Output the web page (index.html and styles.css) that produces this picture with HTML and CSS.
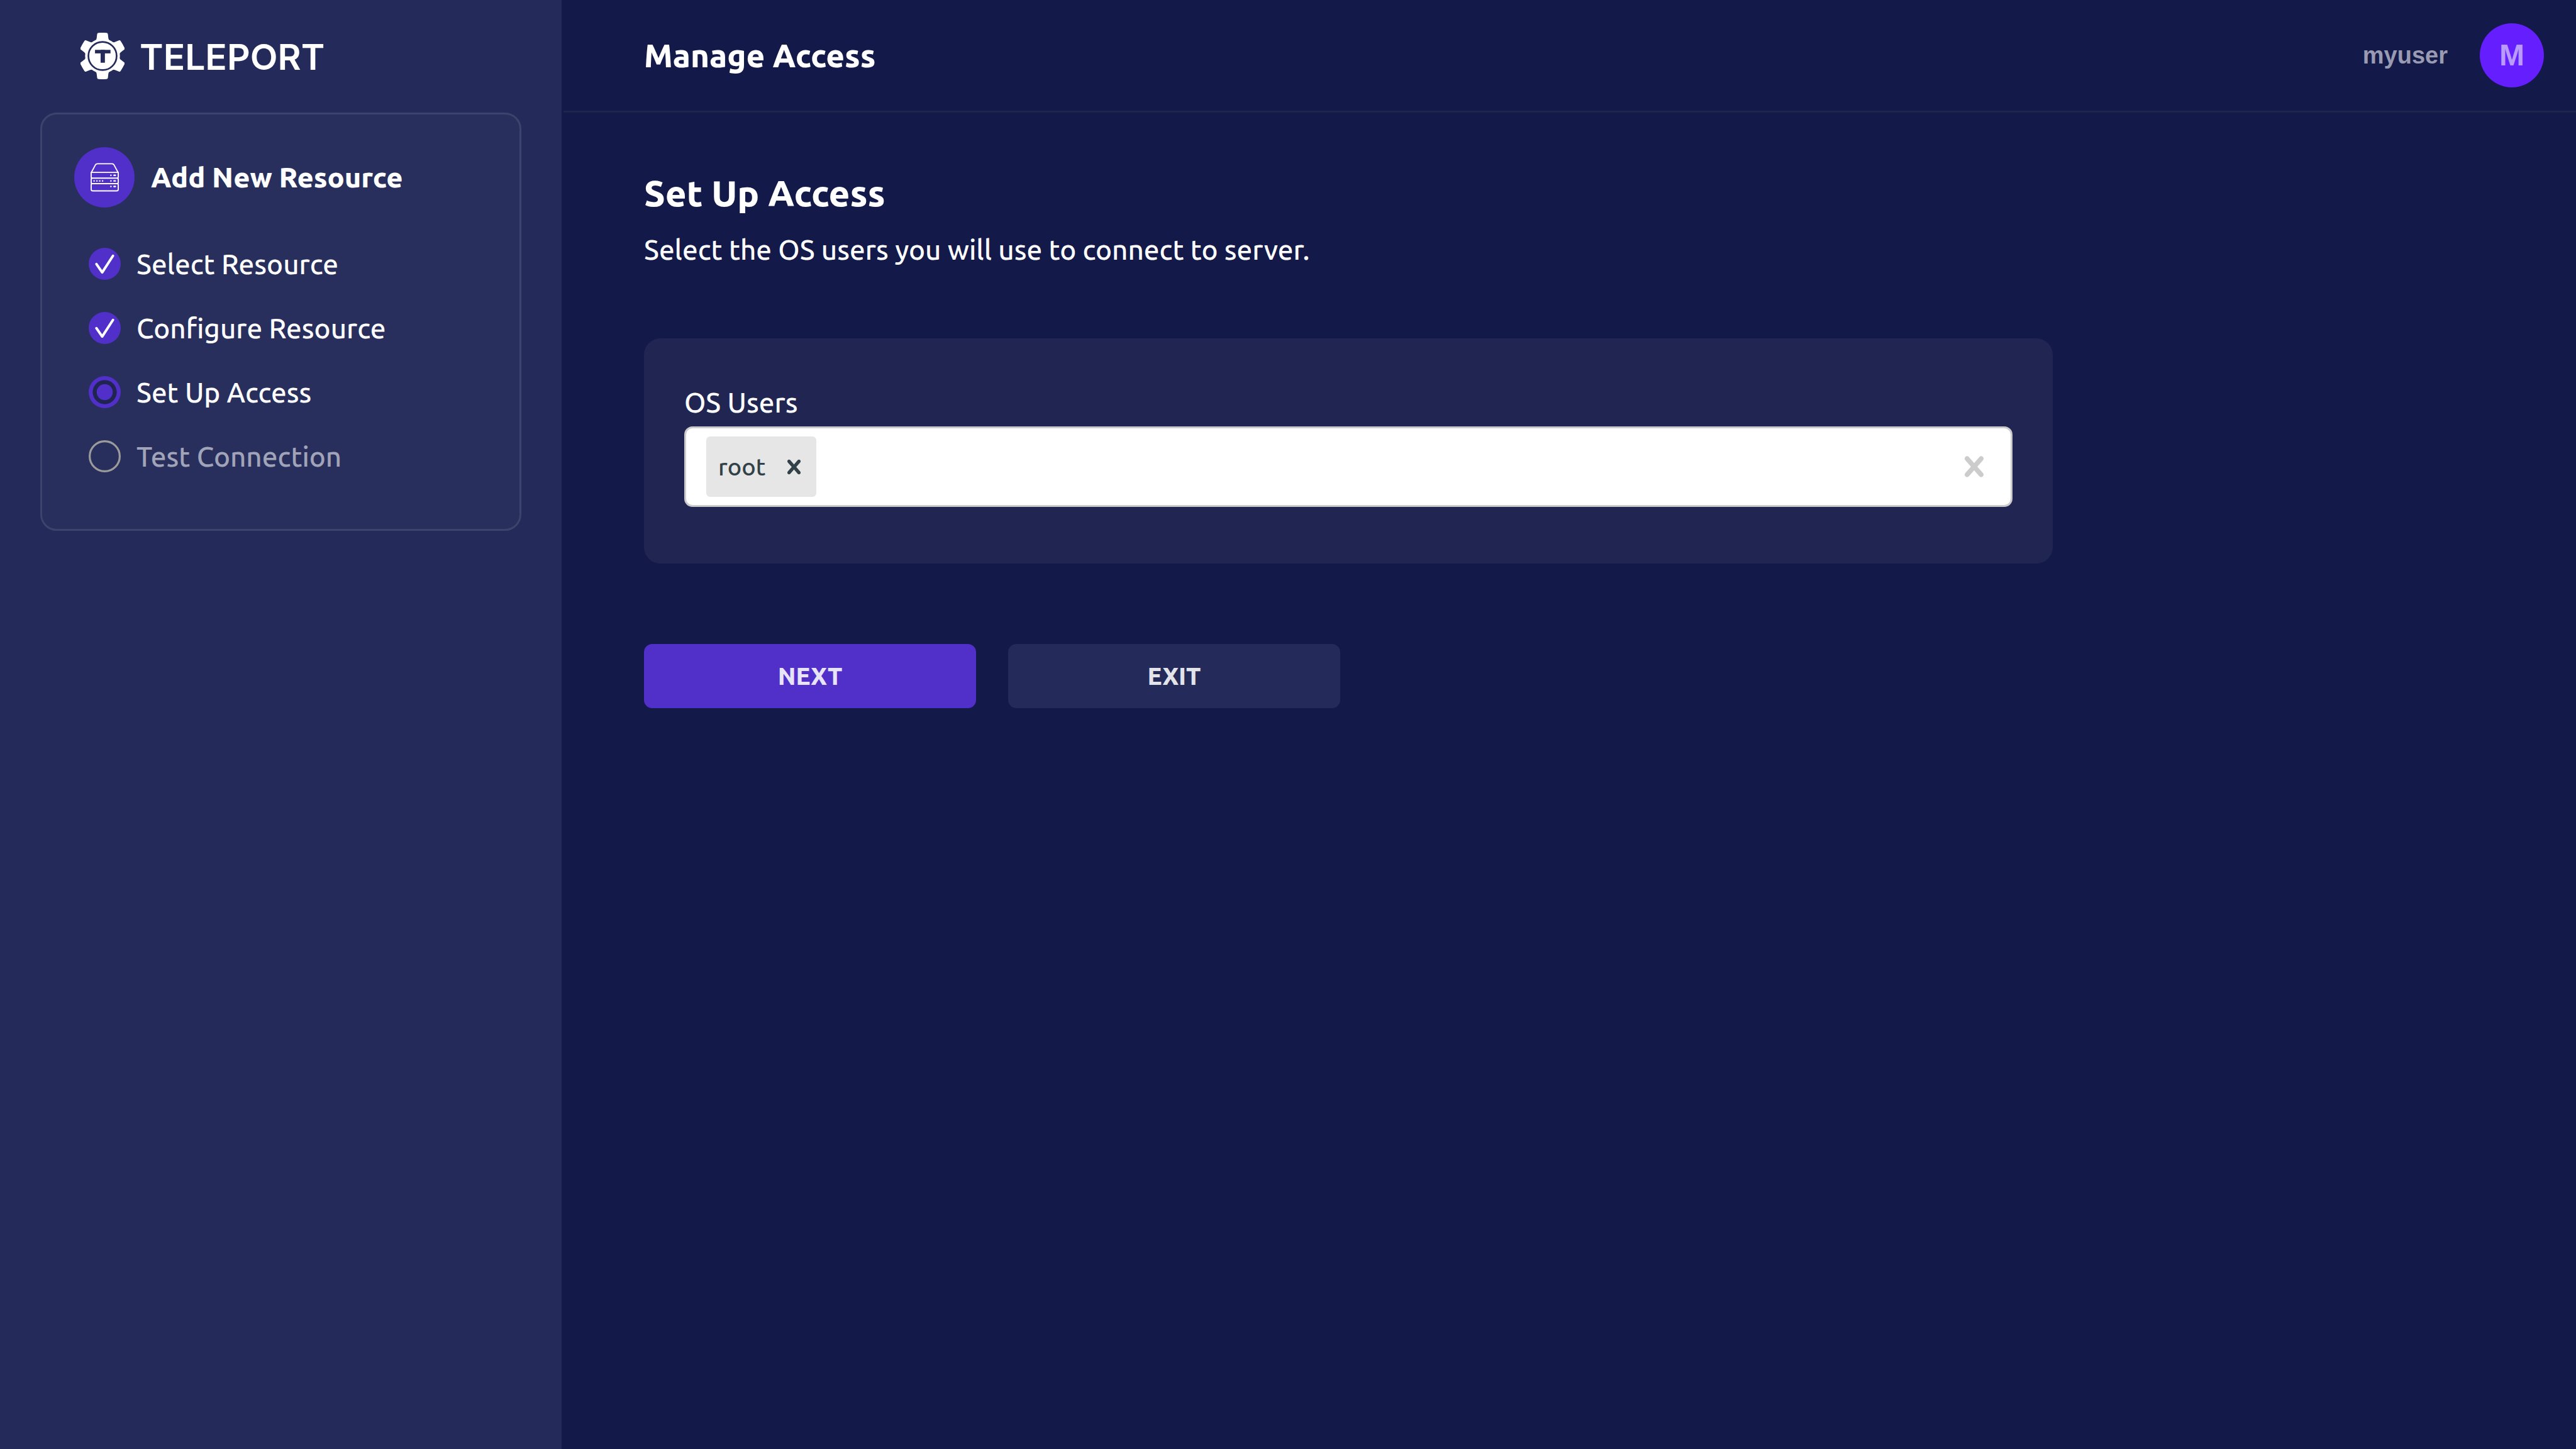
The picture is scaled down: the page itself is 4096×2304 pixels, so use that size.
FILE: index.html
```html
<!DOCTYPE html>
<html lang="en">
<head>
<meta charset="utf-8">
<title>Manage Access</title>
<link rel="stylesheet" href="styles.css">
</head>
<body>
<div class="app">
  <aside class="sidebar">
    <a class="brand" href="#">
      <svg class="brand-mark" viewBox="0 0 88 93" aria-hidden="true">
        <defs>
          <path id="tooth" d="M30 16Q32 13.500 32.300 11L33.300 2.500Q33.700 .3 36 .2Q44 -.3 52 .2Q54.300 .3 54.700 2.500L55.700 11Q56 13.500 58 16V24H30z"/>
        </defs>
        <g fill="#fff">
          <circle cx="44" cy="46.500" r="34.800"/>
          <use href="#tooth"/>
          <use href="#tooth" transform="rotate(60 44 46.500)"/>
          <use href="#tooth" transform="rotate(120 44 46.500)"/>
          <use href="#tooth" transform="rotate(180 44 46.500)"/>
          <use href="#tooth" transform="rotate(240 44 46.500)"/>
          <use href="#tooth" transform="rotate(300 44 46.500)"/>
        </g>
        <circle cx="44" cy="46.500" r="28.200" fill="none" stroke="#242a59" stroke-width="3.400"/>
        <g fill="#242a59">
          <rect x="29" y="34.300" width="31" height="7"/>
          <rect x="40.200" y="34.300" width="8.600" height="25.700"/>
        </g>
      </svg>
      <span class="brand-name">TELEPORT</span>
    </a>
    <nav class="wizard" aria-label="Add New Resource">
      <div class="wizard-head">
        <span class="wizard-icon">
          <svg class="server" viewBox="0 0 56 57" aria-hidden="true">
            <g fill="none" stroke="#fff" stroke-width="2.300" stroke-linejoin="round">
              <path d="M1.200 19.500L9.500 4Q11 1.500 13.500 1.500H42.500Q45 1.500 46.500 4L54.800 19.500"/>
              <path d="M1.200 18.700H54.800V27.500Q54.800 30 52.500 30H3.500Q1.200 30 1.200 27.500z"/>
              <path d="M3.500 30Q1.200 30 1.200 32.500V38.500Q1.200 41 3.500 41H52.500Q54.800 41 54.800 38.500V32.500Q54.800 30 52.500 30"/>
              <path d="M3.500 41Q1.200 41 1.200 43.500V52Q1.200 55.300 4.500 55.300H51.500Q54.800 55.300 54.800 52V43.500Q54.800 41 52.500 41"/>
            </g>
            <g fill="#fff">
              <circle cx="40.300" cy="24.400" r="1.500"/><rect x="45" y="22.900" width="5.400" height="3" rx="1.500"/>
              <circle cx="40.300" cy="35.500" r="1.500"/><rect x="45" y="34" width="5.400" height="3" rx="1.500"/>
              <circle cx="40.300" cy="46.600" r="1.500"/><rect x="45" y="45.100" width="5.400" height="3" rx="1.500"/>
              <circle cx="7" cy="35.500" r="1.500"/><circle cx="12.600" cy="35.500" r="1.500"/><circle cx="18.200" cy="35.500" r="1.500"/><circle cx="23.800" cy="35.500" r="1.500"/>
            </g>
          </svg>
        </span>
        <h2 class="wizard-title">Add New Resource</h2>
      </div>
      <ol class="steps">
        <li class="step">
          <svg class="dot" viewBox="0 0 64 64" aria-hidden="true"><circle cx="32" cy="32" r="32" fill="#512fc9"/><path d="M15.500 32.500L27 49L48.500 16" fill="none" stroke="#fff" stroke-width="5" stroke-linecap="round" stroke-linejoin="round"/></svg>
          <span>Select Resource</span>
        </li>
        <li class="step">
          <svg class="dot" viewBox="0 0 64 64" aria-hidden="true"><circle cx="32" cy="32" r="32" fill="#512fc9"/><path d="M15.500 32.500L27 49L48.500 16" fill="none" stroke="#fff" stroke-width="5" stroke-linecap="round" stroke-linejoin="round"/></svg>
          <span>Configure Resource</span>
        </li>
        <li class="step" aria-current="step">
          <svg class="dot" viewBox="0 0 64 64" aria-hidden="true"><circle cx="32" cy="32" r="32" fill="#512fc9"/><circle cx="32" cy="32" r="24" fill="#1f2450"/><circle cx="32" cy="32" r="16" fill="#512fc9"/></svg>
          <span>Set Up Access</span>
        </li>
        <li class="step step-pending">
          <svg class="dot" viewBox="0 0 64 64" aria-hidden="true"><circle cx="32" cy="32" r="30" fill="none" stroke="#9b9b9b" stroke-width="4"/></svg>
          <span>Test Connection</span>
        </li>
      </ol>
    </nav>
  </aside>
  <div class="page">
    <header class="topbar">
      <h1 class="topbar-title">Manage Access</h1>
      <button class="user" type="button">
        <span>myuser</span>
        <span class="avatar">M</span>
      </button>
    </header>
    <main class="content">
      <h2 class="content-title">Set Up Access</h2>
      <p class="lead">Select the OS users you will use to connect to server.</p>
      <section class="panel">
        <label class="field-label" for="os-users">OS Users</label>
        <div class="select">
          <span class="tag">
            <span>root</span>
            <button class="icon-button" type="button" aria-label="Remove root">
              <svg class="cross-small" viewBox="0 0 20 20"><use href="#cross"/></svg>
            </button>
          </span>
          <input class="select-input" id="os-users" type="text" autocomplete="off">
          <button class="icon-button icon-button-clear" type="button" aria-label="Clear all">
            <svg class="cross-large" viewBox="0 0 20 20"><path id="cross" d="M14.348 14.849c-.469.469-1.229.469-1.697 0l-2.651-3.030-2.651 3.029c-.469.469-1.229.469-1.697 0-.469-.469-.469-1.229 0-1.697l2.758-3.150-2.759-3.152c-.469-.469-.469-1.228 0-1.697s1.228-.469 1.697 0l2.652 3.031 2.651-3.031c.469-.469 1.228-.469 1.697 0s.469 1.229 0 1.697l-2.758 3.152 2.758 3.150c.469.469.469 1.229 0 1.698z"/></svg>
          </button>
        </div>
      </section>
      <div class="actions">
        <button class="button button-primary" type="button">NEXT</button>
        <button class="button" type="button">EXIT</button>
      </div>
    </main>
  </div>
</div>
</body>
</html>
```

FILE: styles.css
```css
* {
  box-sizing: border-box;
}

body {
  margin: 0;
  background: #131948;
  color: #fff;
  font-family: Ubuntu, "Noto Sans", sans-serif;
  font-size: 44px;
  font-weight: 500;
  line-height: 64px;
}

h1, h2, p, ol {
  margin: 0;
  padding: 0;
}

button {
  border: 0;
  font: inherit;
  cursor: pointer;
}

svg {
  display: block;
  fill: currentColor;
}

.app {
  display: flex;
  gap: 3px;
  min-height: 100vh;
}

.sidebar {
  flex: 0 0 893px;
  padding: 0 64px;
  background: #242a59;
}

.brand {
  display: flex;
  align-items: center;
  gap: 24px;
  height: 179px;
  padding: 0 0 2px 64px;
  color: #fff;
  text-decoration: none;
}

.brand-mark {
  width: 70px;
  height: 74px;
}

.brand-name {
  padding-top: 4px;
  font-family: Inter, sans-serif;
  font-size: 57px;
  font-weight: 600;
}

.wizard {
  padding: 52px 51px 90px;
  border: 3px solid #3d446c;
  border-radius: 26px;
  background: #282f5d;
}

.wizard-head {
  display: flex;
  align-items: center;
  gap: 26px;
}

.wizard-icon {
  display: grid;
  place-items: center;
  width: 96px;
  height: 96px;
  border-radius: 50%;
  background: #512fc9;
}

.server {
  width: 45px;
  height: 46px;
}

.wizard-title {
  font-size: 45px;
  font-weight: 800;
}

.steps {
  display: grid;
  gap: 51px;
  margin-top: 64px;
  padding-left: 23px;
  list-style: none;
}

.step {
  display: flex;
  align-items: center;
  gap: 25px;
  height: 51px;
}

.step-pending {
  color: #a1a4b8;
}

.dot {
  width: 51px;
  height: 51px;
}

.page {
  flex: 1;
  min-width: 0;
}

.topbar {
  display: flex;
  align-items: center;
  justify-content: space-between;
  height: 179px;
  padding: 0 51px 0 128px;
  border-bottom: 3px solid #1f264d;
}

.topbar-title {
  font-size: 51px;
  font-weight: 800;
}

.user {
  display: flex;
  align-items: center;
  gap: 51px;
  padding: 0;
  background: none;
  color: #989bb1;
  font-family: "Liberation Sans", Arial, sans-serif;
  font-size: 38px;
  font-weight: 700;
}

.avatar {
  display: grid;
  place-items: center;
  width: 102px;
  height: 102px;
  border-radius: 50%;
  background: #651fff;
  color: #b99bff;
  font-size: 48px;
}

.content {
  padding: 96px 128px;
}

.content-title {
  font-size: 58px;
  font-weight: 800;
}

.lead {
  margin-top: 26px;
}

.panel {
  max-width: 2240px;
  margin-top: 109px;
  padding: 70px 64px 90px;
  border-radius: 26px;
  background: #202651;
}

.field-label {
  display: block;
}

.select {
  display: flex;
  align-items: center;
  height: 128px;
  margin-top: 6px;
  padding: 0 26px 0 32px;
  border: 3px solid #ccc;
  border-radius: 13px;
  background: #fff;
  color: #324148;
}

.tag {
  display: flex;
  align-items: center;
  gap: 23px;
  height: 96px;
  padding: 0 13px 0 19px;
  border-radius: 6px;
  background: #e6e6e6;
  font-size: 38px;
}

.icon-button {
  padding: 0;
  background: none;
  color: inherit;
}

.icon-button-clear {
  color: #ccc;
}

.cross-small {
  width: 45px;
  height: 45px;
}

.cross-large {
  width: 64px;
  height: 64px;
}

.select-input {
  flex: 1;
  min-width: 0;
  border: 0;
  outline: 0;
  background: none;
  color: inherit;
  font: inherit;
}

.actions {
  display: flex;
  gap: 51px;
  margin-top: 128px;
}

.button {
  width: 528px;
  height: 102px;
  border-radius: 13px;
  background: #242a59;
  color: #e3e4ea;
  font-size: 38px;
  font-weight: 800;
}

.button-primary {
  background: #512fc9;
  color: #e8e4f8;
}
```
